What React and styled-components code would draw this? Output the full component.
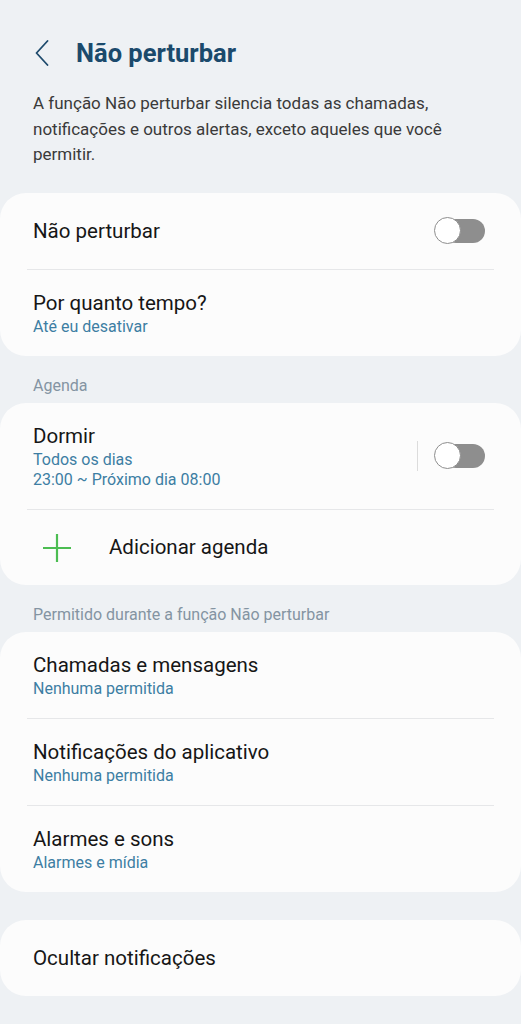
import styled, { createGlobalStyle } from "styled-components";

const GlobalStyle = createGlobalStyle`
  body {
    margin: 0;
    background: #eef1f4;
    font-family: Roboto, "Noto Sans", "Liberation Sans", sans-serif;
    color: #161616;
  }
`;

const Page = styled.div`
  width: 521px;
  min-height: 1024px;
  background: #eef1f4;
`;

const Header = styled.header`
  display: flex;
  align-items: center;
  gap: 27px;
  padding: 38px 0 0 35px;
  height: 30px;
`;

const BackButton = styled.button`
  display: flex;
  align-items: center;
  padding: 0;
  border: none;
  background: none;
  color: #1d4a6c;
`;

const Title = styled.h1`
  margin: 0;
  font-size: 25.5px;
  line-height: 30px;
  font-weight: 700;
  color: #1b4a6c;
`;

const Intro = styled.p`
  margin: 23px 0 0;
  padding: 0 33px;
  font-size: 17px;
  line-height: 25.5px;
  color: #3a3a3a;
`;

const Card = styled.section`
  margin: ${(p) => p.$top || 0}px 0 0;
  background: #fcfcfc;
  border-radius: 26px;
  overflow: hidden;
`;

const SectionLabel = styled.h2`
  margin: 0;
  padding: 20px 33px 7px;
  font-size: 16px;
  line-height: 20px;
  font-weight: 400;
  color: #8494a2;
`;

const Row = styled.div`
  display: flex;
  align-items: center;
  gap: 16px;
  min-height: ${(p) => p.$min || 76}px;
  padding: 20px 33px 19px ${(p) => (p.$icon ? 42 : 33)}px;
  box-sizing: border-box;
`;

const Divider = styled.hr`
  margin: 0 27px;
  border: none;
  border-top: 1px solid #e6e7e9;
`;

const Texts = styled.div`
  flex: 1;
  display: flex;
  flex-direction: column;
`;

const Label = styled.span`
  font-size: 20.5px;
  line-height: 27px;
  color: #161616;
`;

const Sub = styled.span`
  font-size: 16px;
  line-height: 20px;
  color: #3d7ea3;
`;

const VLine = styled.span`
  width: 1px;
  height: 30px;
  background: #dcdcdc;
`;

const Switch = styled.span`
  position: relative;
  width: 51px;
  height: 28px;
  flex-shrink: 0;
  margin-right: 3px;

  &::before {
    content: "";
    position: absolute;
    left: 10px;
    right: 0;
    top: 2px;
    bottom: 2px;
    border-radius: 12px;
    background: #8e8e8e;
  }

  &::after {
    content: "";
    position: absolute;
    left: 0;
    top: 0;
    width: 25px;
    height: 25px;
    border-radius: 50%;
    background: #fff;
    border: 1.5px solid #8e8e8e;
  }
`;

const PlusIcon = styled.span`
  display: flex;
  width: 30px;
  margin-right: 21px;
  color: #4cbd52;
`;

function Toggle() {
  return <Switch />;
}

function Item({ title, sub, children }) {
  return (
    <Row>
      <Texts>
        <Label>{title}</Label>
        {sub &&
          [].concat(sub).map((line) => <Sub key={line}>{line}</Sub>)}
      </Texts>
      {children}
    </Row>
  );
}

export default function App() {
  return (
    <Page>
      <GlobalStyle />
      <Header>
        <BackButton aria-label="Voltar">
          <svg width="14" height="26" viewBox="0 0 14 26">
            <polyline
              points="12.5,1 1.5,13 12.5,25"
              fill="none"
              stroke="currentColor"
              strokeWidth="1.8"
              strokeLinecap="round"
              strokeLinejoin="round"
            />
          </svg>
        </BackButton>
        <Title>Não perturbar</Title>
      </Header>

      <Intro>
        A função Não perturbar silencia todas as chamadas, notificações e
        outros alertas, exceto aqueles que você permitir.
      </Intro>

      <Card $top={25}>
        <Item title="Não perturbar">
          <Toggle />
        </Item>
        <Divider />
        <Item title="Por quanto tempo?" sub="Até eu desativar" />
      </Card>

      <SectionLabel>Agenda</SectionLabel>
      <Card>
        <Item
          title="Dormir"
          sub={["Todos os dias", "23:00 ~ Próximo dia 08:00"]}
        >
          <VLine />
          <Toggle />
        </Item>
        <Divider />
        <Row $icon $min={75}>
          <PlusIcon>
            <svg width="30" height="30" viewBox="0 0 30 30">
              <path
                d="M15 1v28M1 15h28"
                stroke="currentColor"
                strokeWidth="2.2"
                fill="none"
              />
            </svg>
          </PlusIcon>
          <Texts>
            <Label>Adicionar agenda</Label>
          </Texts>
        </Row>
      </Card>

      <SectionLabel>Permitido durante a função Não perturbar</SectionLabel>
      <Card>
        <Item title="Chamadas e mensagens" sub="Nenhuma permitida" />
        <Divider />
        <Item title="Notificações do aplicativo" sub="Nenhuma permitida" />
        <Divider />
        <Item title="Alarmes e sons" sub="Alarmes e mídia" />
      </Card>

      <Card $top={28}>
        <Item title="Ocultar notificações" />
      </Card>
    </Page>
  );
}
